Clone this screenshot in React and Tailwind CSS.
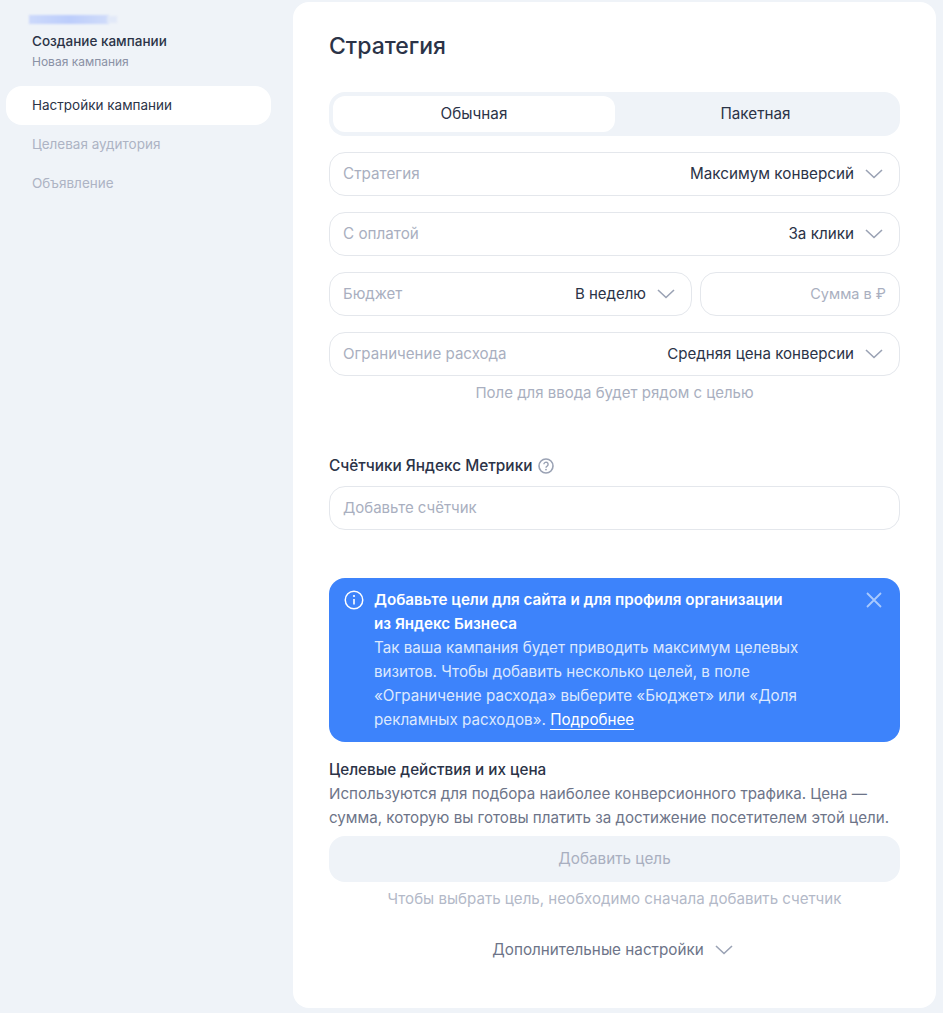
function Chevron({ className = '' }) {
  return (
    <svg width="18" height="10" viewBox="0 0 18 10" fill="none" className={className}>
      <path d="M1 1l8 7.5L17 1" stroke="#9aa2b4" strokeWidth="1.6" />
    </svg>
  )
}

function SelectField({ label, value, className = '' }) {
  return (
    <div className={`flex h-11 items-center justify-between rounded-2xl border border-[#e4e7ec] pr-[16px] pl-[13px] ${className}`}>
      <span className="text-[#a9afc0]">{label}</span>
      <div className="flex items-center gap-[11px]">
        <span className="text-[#2b3347]">{value}</span>
        <Chevron />
      </div>
    </div>
  )
}

function Sidebar() {
  return (
    <aside className="w-[293px] shrink-0 pt-[15px] pr-[22px] pl-[6px]">
      <div className="relative ml-[23px] h-[9px] w-[88px] blur-[1px]">
        <div className="h-[9px] w-[80px] bg-gradient-to-r from-[#ccd9fb] via-[#bccdfb] to-[#d0dcfa]" />
        <div className="absolute top-[1px] right-0 h-[7px] w-[10px] bg-[#e2e9f8]" />
      </div>
      <div className="mt-[7px] pl-[26px] text-[13.5px] leading-[20px] font-medium text-[#2b3347]">Создание кампании</div>
      <div className="mt-[2px] pl-[26px] text-[12px] leading-[18px] text-[#8a91a5]">Новая кампания</div>
      <nav className="mt-[15px] flex flex-col text-[13.5px]">
        <div className="flex h-[39px] items-center rounded-2xl bg-white pb-[1px] pl-[26px] text-[#2b3347]">Настройки кампании</div>
        <div className="flex h-[39px] items-center pb-[1px] pl-[26px] text-[#adb3c4]">Целевая аудитория</div>
        <div className="flex h-[39px] items-center pb-[1px] pl-[26px] text-[#adb3c4]">Объявление</div>
      </nav>
    </aside>
  )
}

export default function App() {
  return (
    <div className="flex h-[1013px] w-[943px] overflow-hidden bg-[#eff3f8] font-['Inter','Noto_Sans',sans-serif] text-[15.25px] leading-6">
      <Sidebar />
      <main className="mt-[2px] mb-[5px] h-[1006px] w-[643px] rounded-2xl bg-white px-[36px] pt-[28px]">
        <h1 className="text-[23px] leading-[32px] font-medium text-[#2b3347]">Стратегия</h1>

        <div className="mt-[30px] flex h-11 rounded-2xl bg-[#eff3f8] p-1">
          <div className="flex h-9 w-[282px] items-center justify-center rounded-xl bg-white text-[#2b3347]">Обычная</div>
          <div className="flex h-9 flex-1 items-center justify-center text-[#2b3347]">Пакетная</div>
        </div>

        <div className="mt-4 flex flex-col gap-4">
          <SelectField label="Стратегия" value="Максимум конверсий" />
          <SelectField label="С оплатой" value="За клики" />
          <div className="flex gap-2">
            <SelectField label="Бюджет" value="В неделю" className="w-[363px] text-[15px]" />
            <div className="flex h-11 flex-1 items-center justify-end rounded-2xl border border-[#e4e7ec] pr-[13px] text-[14.5px] text-[#a9afc0]">Сумма в ₽</div>
          </div>
          <SelectField label="Ограничение расхода" value="Средняя цена конверсии" className="text-[15.1px]" />
        </div>
        <p className="mt-[5px] text-center text-[15px] text-[#a9afc0]">Поле для ввода будет рядом с целью</p>

        <div className="mt-[49px] flex items-center gap-[6px]">
          <span className="text-[15.4px] font-medium text-[#2b3347]">Счётчики Яндекс Метрики</span>
          <svg width="16" height="16" viewBox="0 0 16 16" fill="none">
            <circle cx="8" cy="8" r="7" stroke="#9aa2b4" strokeWidth="1.6" />
            <path d="M5.9 6.3a2.1 2.1 0 1 1 3.2 1.8c-.7.4-1.1.8-1.1 1.6" stroke="#9aa2b4" strokeWidth="1.4" />
            <circle cx="8" cy="11.6" r=".9" fill="#9aa2b4" />
          </svg>
        </div>
        <div className="mt-2 flex h-11 items-center rounded-2xl border border-[#e4e7ec] pl-[13px] text-[15px] text-[#a9afc0]">Добавьте счётчик</div>

        <div className="mt-12 flex h-[164px] rounded-2xl bg-[#3d83fb] pt-[10px] pr-4 pl-4 text-[15.2px] text-[#dce8fe]">
          <svg width="20" height="20" viewBox="0 0 20 20" fill="none" className="mt-[2px] -ml-[1px] shrink-0">
            <circle cx="10" cy="10" r="8.75" stroke="#fff" strokeWidth="1.5" />
            <path d="M10 9v5.5" stroke="#fff" strokeWidth="1.6" />
            <circle cx="10" cy="6" r="1.1" fill="#fff" />
          </svg>
          <div className="ml-[10px] w-[440px]">
            <div className="font-semibold text-white">
              Добавьте цели для сайта и для профиля организации
              <br />
              из Яндекс Бизнеса
            </div>
            <div>
              Так ваша кампания будет приводить максимум целевых
              <br />
              визитов. Чтобы добавить несколько целей, в поле
              <br />
              «Ограничение расхода» выберите «Бюджет» или «Доля
              <br />
              рекламных расходов». <span className="border-b border-white text-white">Подробнее</span>
            </div>
          </div>
          <svg width="16" height="16" viewBox="0 0 16 16" fill="none" className="mt-[4px] mr-[2px] ml-auto shrink-0">
            <path d="M1 1l14 14M15 1L1 15" stroke="#a9c9fd" strokeWidth="1.8" />
          </svg>
        </div>

        <div className="mt-4 font-medium text-[#2b3347]">Целевые действия и их цена</div>
        <p className="text-[15.15px] text-[#6d7488]">
          Используются для подбора наиболее конверсионного трафика. Цена —
          <br />
          сумма, которую вы готовы платить за достижение посетителем этой цели.
        </p>
        <div className="mt-[6px] flex h-[46px] items-center justify-center rounded-2xl bg-[#eff3f8] text-[#a9afc0]">Добавить цель</div>
        <p className="mt-[5px] text-center text-[15.1px] text-[#b3b9c8]">Чтобы выбрать цель, необходимо сначала добавить счетчик</p>
        <div className="mt-[27px] mr-[4px] flex items-center justify-center gap-[11px] text-[#6d7488]">
          <span>Дополнительные настройки</span>
          <Chevron />
        </div>
      </main>
    </div>
  )
}
